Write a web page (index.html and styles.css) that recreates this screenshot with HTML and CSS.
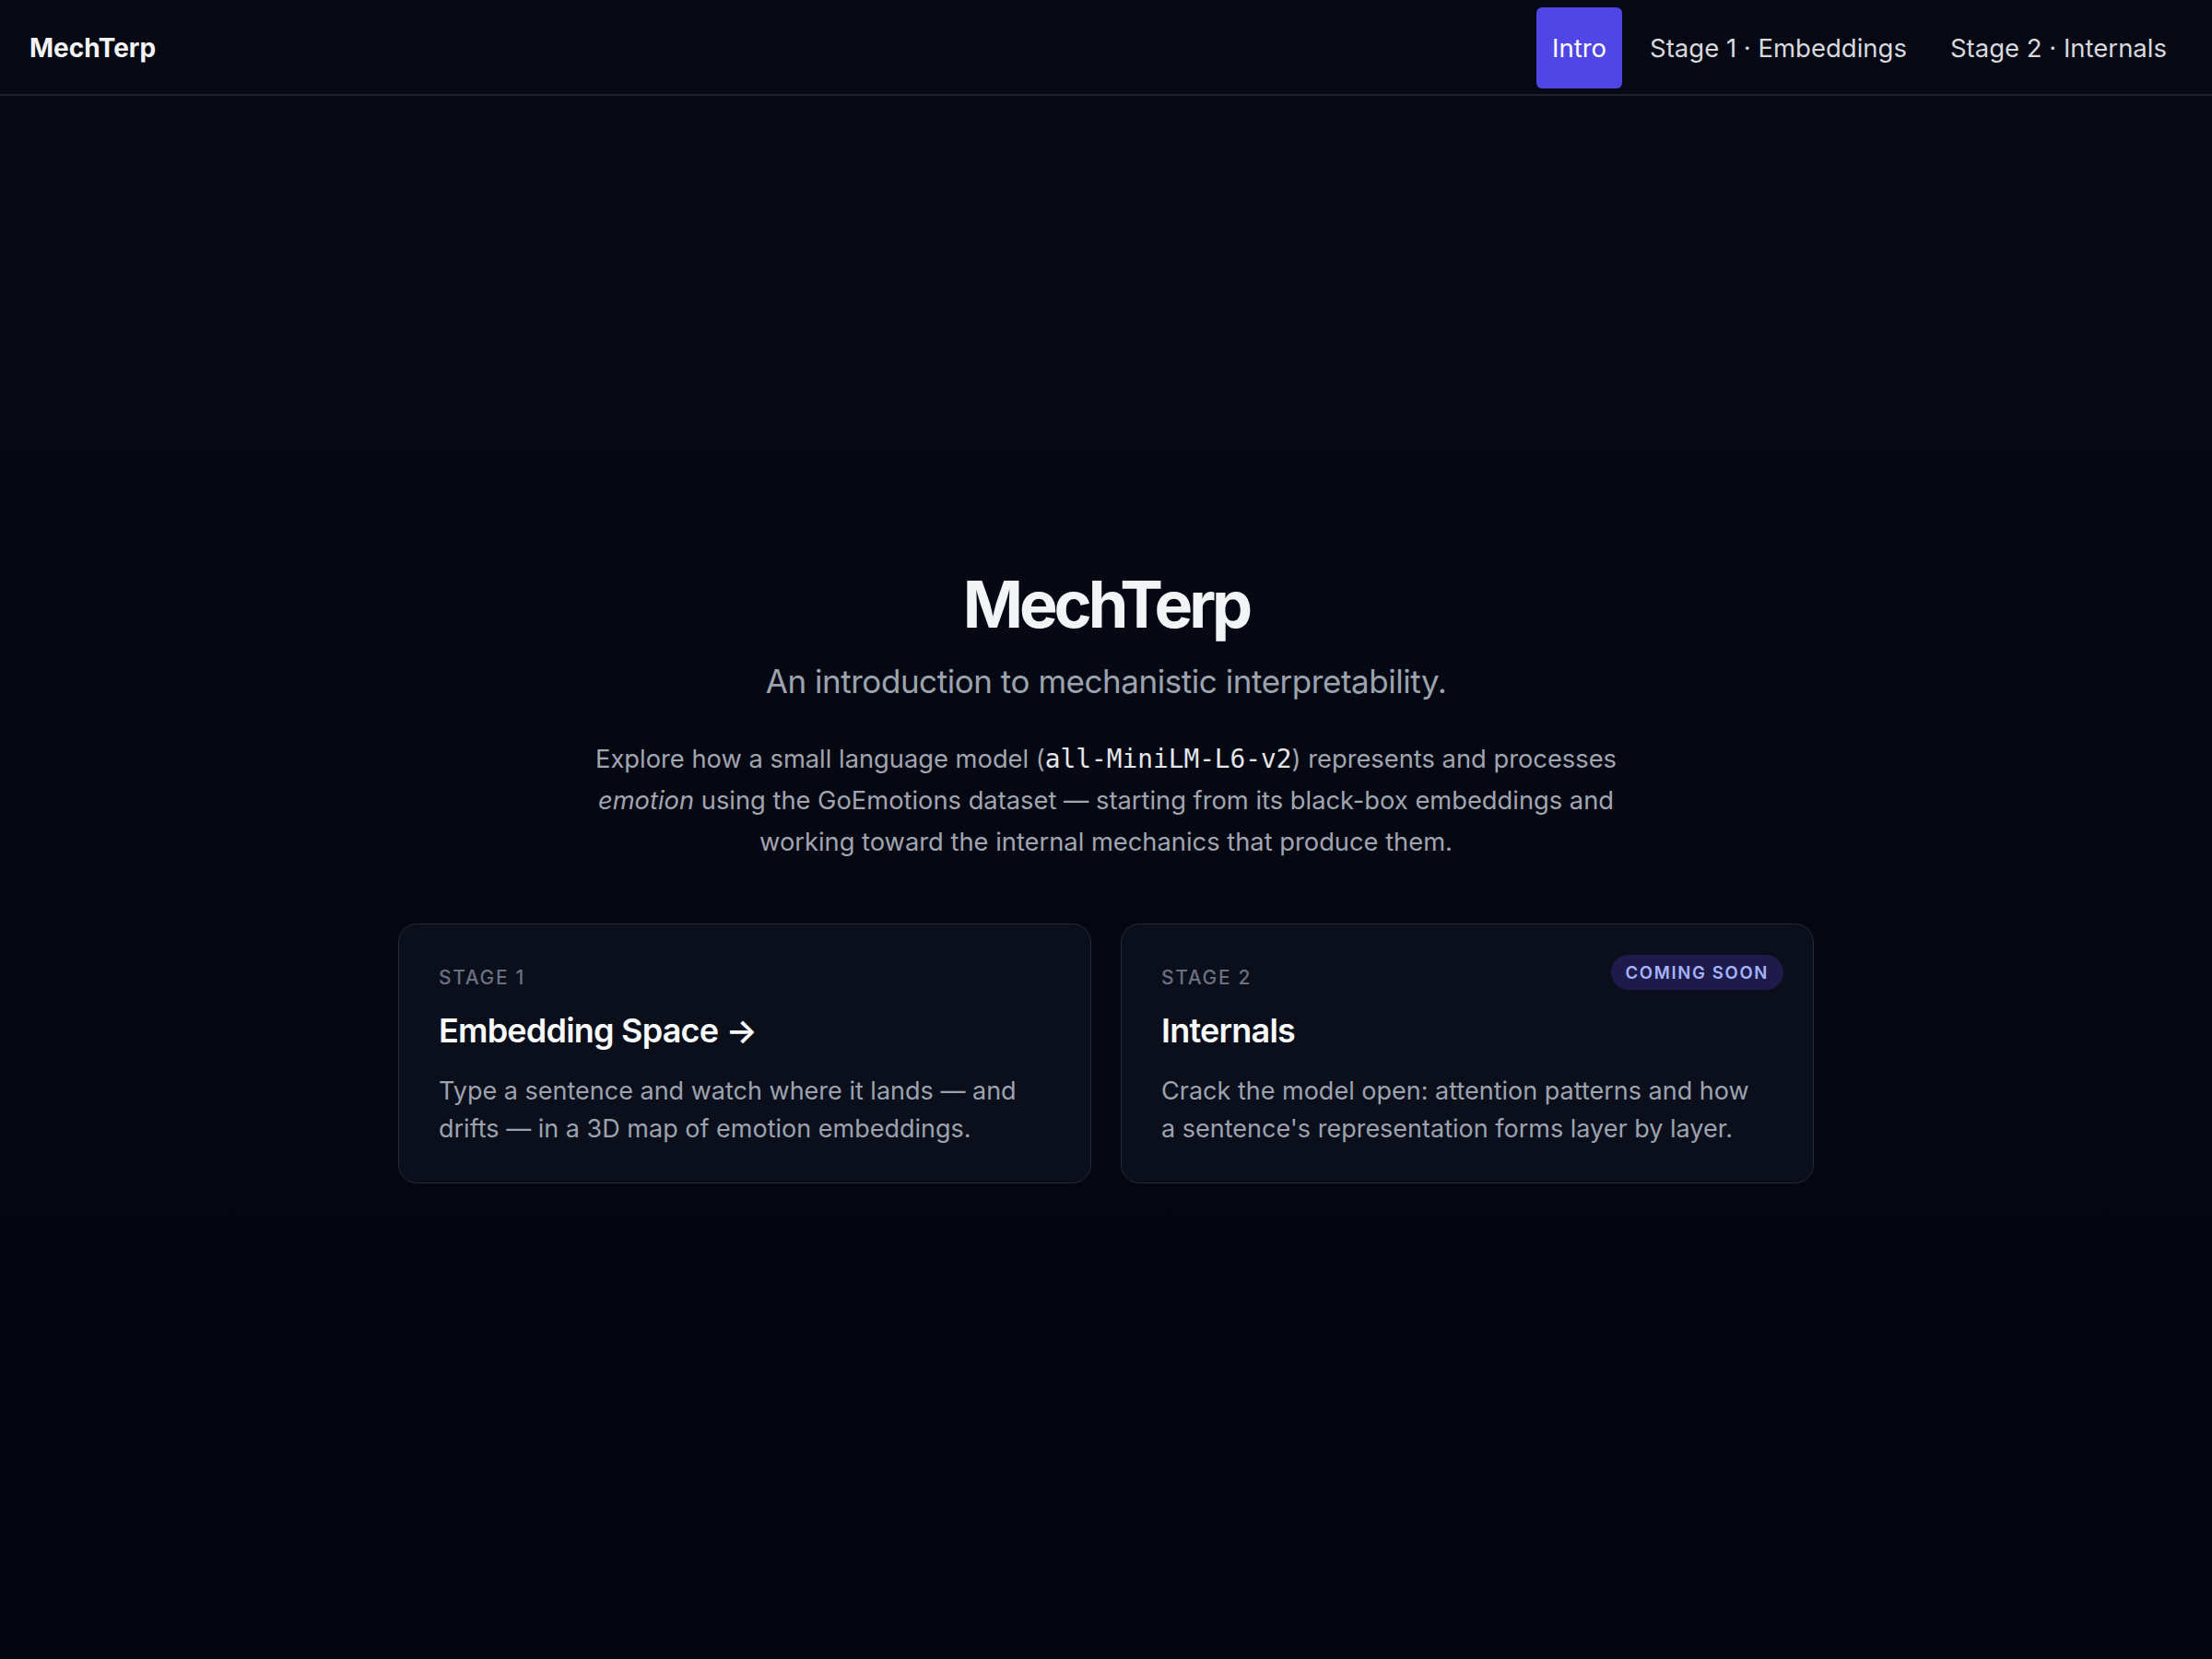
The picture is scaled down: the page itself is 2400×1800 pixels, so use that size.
FILE: index.html
```html
<!DOCTYPE html>
<html lang="en">
<head>
<meta charset="utf-8">
<title>MechTerp</title>
<link rel="stylesheet" href="styles.css">
</head>
<body>
<header class="topbar">
  <a class="brand" href="#">MechTerp</a>
  <nav class="nav">
    <a class="nav-link active" href="#">Intro</a>
    <a class="nav-link" href="#">Stage 1 · Embeddings</a>
    <a class="nav-link" href="#">Stage 2 · Internals</a>
  </nav>
</header>
<main class="main">
  <section class="hero">
    <h1 class="title">MechTerp</h1>
    <p class="subtitle">An introduction to mechanistic interpretability.</p>
    <p class="lead">Explore how a small language model (<code class="mono">all-MiniLM-L6-v2</code>) represents and processes <em>emotion</em> using the GoEmotions dataset — starting from its black-box embeddings and working toward the internal mechanics that produce them.</p>
    <div class="cards">
      <a class="card" href="#">
        <div class="card-label">Stage 1</div>
        <h2 class="card-title">Embedding Space →</h2>
        <p class="card-text">Type a sentence and watch where it lands — and drifts — in a 3D map of emotion embeddings.</p>
      </a>
      <div class="card">
        <span class="badge">Coming soon</span>
        <div class="card-label">Stage 2</div>
        <h2 class="card-title">Internals</h2>
        <p class="card-text">Crack the model open: attention patterns and how a sentence's representation forms layer by layer.</p>
      </div>
    </div>
  </section>
</main>
</body>
</html>
```

FILE: styles.css
```css
* { box-sizing: border-box; }
html, body { margin: 0; padding: 0; }
body {
  font-family: Inter, "Noto Sans", "Liberation Sans", sans-serif;
  background: linear-gradient(#070a15, #030611);
  color: #f3f4f6;
  min-height: 100vh;
}
a { color: inherit; text-decoration: none; }

.topbar {
  height: 104px;
  display: flex;
  align-items: center;
  justify-content: space-between;
  padding: 2px 32px 0;
  border-bottom: 2px solid #1d212b;
  background: #060913;
}
.brand {
  font-size: 28px;
  font-weight: 700;
  color: #f3f4f6;
  letter-spacing: 0;
}
.nav { display: flex; gap: 13px; align-items: center; }
.nav-link {
  height: 88px;
  display: flex;
  align-items: center;
  padding: 0 17px;
  font-size: 27.5px;
  color: #d7d9df;
  border-radius: 6px;
}
.nav-link.active { background: #4f46e5; color: #ffffff; }

.main {
  min-height: calc(100vh - 104px);
  display: flex;
  align-items: center;
  justify-content: center;
}
.hero {
  display: flex;
  flex-direction: column;
  align-items: center;
  text-align: center;
  padding-top: 0;
}
.title {
  margin: 0;
  font-size: 70px;
  line-height: 72px;
  font-weight: 700;
  letter-spacing: -0.058em;
  color: #f3f4f6;
}
.subtitle {
  margin: 23px 0 0;
  font-size: 35px;
  line-height: 48px;
  letter-spacing: -0.013em;
  color: #9ca3af;
}
.lead {
  margin: 38px 0 0;
  max-width: 1140px;
  font-size: 27.3px;
  line-height: 45px;
  color: #a1a5b0;
}
.lead em { font-style: italic; }
.mono {
  font-family: "DejaVu Sans Mono", "Liberation Mono", monospace;
  font-size: 27.8px;
  color: #e5e7eb;
}

.cards {
  margin-top: 66px;
  width: 1536px;
  display: grid;
  grid-template-columns: 1fr 1fr;
  gap: 32px;
  text-align: left;
}
.card {
  position: relative;
  display: block;
  background: #0b0f1c;
  border: 1.5px solid #252a38;
  border-radius: 20px;
  padding: 42px 48px 38px 43px;
}
.card-label {
  font-size: 21px;
  line-height: 31.5px;
  letter-spacing: 0.08em;
  text-transform: uppercase;
  color: #6b7080;
  font-weight: 500;
}
.card-title {
  margin: 17.5px 0 0;
  font-size: 36px;
  line-height: 48px;
  font-weight: 600;
  color: #f9fafb;
  letter-spacing: -0.022em;
}
.card-text {
  margin: 22.5px 0 0;
  font-size: 27px;
  line-height: 40.5px;
  color: #9ca3af;
}
.badge {
  position: absolute;
  top: 33px;
  right: 32px;
  height: 38px;
  line-height: 38px;
  padding: 0 16px;
  border-radius: 999px;
  background: #1e1b4b;
  color: #a5b4fc;
  font-size: 18.5px;
  font-weight: 600;
  letter-spacing: 0.09em;
  text-transform: uppercase;
}
```
